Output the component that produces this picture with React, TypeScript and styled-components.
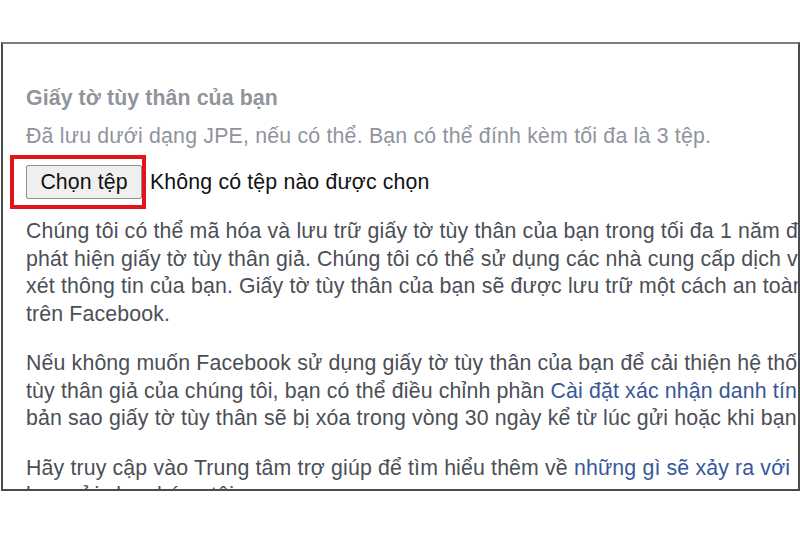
import { createGlobalStyle, styled } from "styled-components";

const GlobalStyle = createGlobalStyle`
  html, body {
    margin: 0;
    padding: 0;
    background: #ffffff;
  }
  body {
    font-family: "Liberation Sans", Arial, sans-serif;
  }
`;

const Page = styled.div`
  width: 800px;
  height: 533px;
  padding-top: 42px;
  box-sizing: border-box;
  overflow: hidden;
`;

const Frame = styled.section`
  margin-left: 1px;
  width: 799px;
  height: 449px;
  box-sizing: border-box;
  border: 2px solid #4b4b4b;
  border-top-color: #7d7d7d;
  padding: 41px 0 0 23px;
  overflow: hidden;
  background: #ffffff;
`;

const Heading = styled.h2`
  margin: 0;
  font-size: 21.3px;
  line-height: 27.5px;
  letter-spacing: 0.1px;
  font-weight: bold;
  color: #90949c;
`;

const Hint = styled.p`
  margin: 10px 0 0;
  font-size: 21.3px;
  line-height: 27px;
  letter-spacing: 0.2px;
  color: #90949c;
  white-space: nowrap;
`;

const FileRow = styled.div`
  display: flex;
  align-items: center;
  gap: 8px;
  margin-top: 15.5px;
`;

const ButtonWrap = styled.div`
  position: relative;
  display: flex;
`;

const FileButton = styled.button`
  height: 34px;
  width: 116px;
  padding: 0;
  box-sizing: border-box;
  border: 1px solid #8f8f8f;
  border-radius: 2px;
  background: #efefef;
  color: #111111;
  font-family: inherit;
  font-size: 21.3px;
  letter-spacing: 0.1px;
`;

const Highlight = styled.span`
  position: absolute;
  top: -10px;
  bottom: -10px;
  left: -16px;
  right: -4px;
  border: 4px solid #e3131b;
  pointer-events: none;
`;

const FileName = styled.span`
  font-size: 21.3px;
  letter-spacing: 0.15px;
  color: #111111;
  white-space: nowrap;
`;

const Body = styled.div`
  margin-top: 19px;
`;

const Paragraph = styled.p`
  margin: 0 0 22px;
  font-size: 21.3px;
  line-height: 27.5px;
  letter-spacing: 0.15px;
  color: #4b4f56;
  white-space: nowrap;
`;

const Link = styled.a`
  color: #365899;
  text-decoration: none;
`;

export default function App() {
  return (
    <>
      <GlobalStyle />
      <Page>
        <Frame>
          <Heading>Giấy tờ tùy thân của bạn</Heading>
          <Hint>Đã lưu dưới dạng JPE, nếu có thể. Bạn có thể đính kèm tối đa là 3 tệp.</Hint>
          <FileRow>
            <ButtonWrap>
              <FileButton type="button">Chọn tệp</FileButton>
              <Highlight />
            </ButtonWrap>
            <FileName>Không có tệp nào được chọn</FileName>
          </FileRow>
          <Body>
            <Paragraph>
              Chúng tôi có thể mã hóa và lưu trữ giấy tờ tùy thân của bạn trong tối đa 1 năm để
              <br />
              phát hiện giấy tờ tùy thân giả. Chúng tôi có thể sử dụng các nhà cung cấp dịch vụ
              <br />
              xét thông tin của bạn. Giấy tờ tùy thân của bạn sẽ được lưu trữ một cách an toàn
              <br />
              trên Facebook.
            </Paragraph>
            <Paragraph>
              Nếu không muốn Facebook sử dụng giấy tờ tùy thân của bạn để cải thiện hệ thống
              <br />
              tùy thân giả của chúng tôi, bạn có thể điều chỉnh phần{" "}
              <Link href="#">Cài đặt xác nhận danh tính</Link>
              <br />
              bản sao giấy tờ tùy thân sẽ bị xóa trong vòng 30 ngày kể từ lúc gửi hoặc khi bạn
            </Paragraph>
            <Paragraph>
              Hãy truy cập vào Trung tâm trợ giúp để tìm hiểu thêm về{" "}
              <Link href="#">những gì sẽ xảy ra với</Link>
              <br />
              bạn gửi cho chúng tôi.
            </Paragraph>
          </Body>
        </Frame>
      </Page>
    </>
  );
}
